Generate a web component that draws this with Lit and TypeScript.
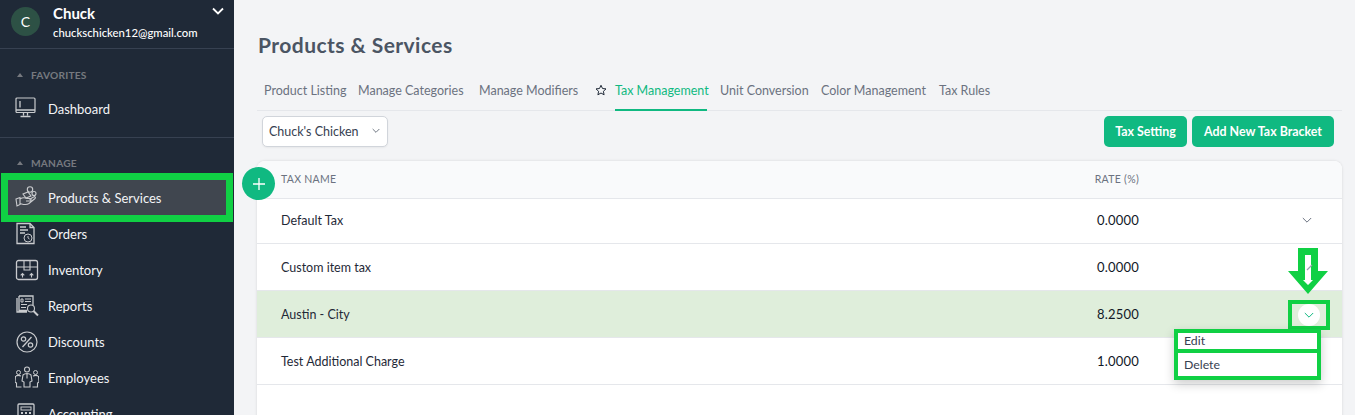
import { LitElement, html, css, svg } from "lit";
import { customElement } from "lit/decorators.js";
import { styleMap } from "lit/directives/style-map.js";

const icons: Record<string, unknown> = {
  dashboard: svg`<rect x="1" y="1" width="19" height="14.500" rx="1" fill="none" stroke="currentColor" stroke-width="1.200"/><path d="M5 4v6.500M1 13h19M8.500 15.500v3M12.500 15.500v3M5.500 19.500h10" fill="none" stroke="currentColor" stroke-width="1.300"/>`,
  products: svg`<path d="M1 13l4-1.500v7L2 20zM5 13c3-2 5-1.500 7-.5h3c1.500 0 1.500 2.500 0 2.500h-4M5 17.500c4 1 6 2 9 0l6-5c1-1 0-2.500-1.500-1.500l-4 2.500" fill="none" stroke="currentColor" stroke-width="1.100"/><path d="M8 8l5-2 3 4-5 2z" fill="none" stroke="currentColor" stroke-width="1.100"/><circle cx="15" cy="3.500" r="2.700" fill="none" stroke="currentColor" stroke-width="1.100"/><circle cx="19" cy="7.500" r="2" fill="none" stroke="currentColor" stroke-width="1.100"/>`,
  orders: svg`<path d="M2 1.500h13l4 4v16H2zM15 1.500v4h4M5 5h6M5 8h8M5 11h5" fill="none" stroke="currentColor" stroke-width="1.300"/><circle cx="13" cy="16" r="4" fill="#1f2937" stroke="currentColor"/><path d="M13 14v2l1.500 1" fill="none" stroke="currentColor" stroke-width=".9"/>`,
  inventory: svg`<rect x="1.500" y="2.500" width="21" height="19" rx="2" fill="none" stroke="currentColor" stroke-width="1.300"/><path d="M1.500 9h21M9 2.500V12h6V2.500M7.500 19.500v-4M5.700 17.300l1.800-1.800 1.800 1.800M16.500 19.500v-4M14.700 17.300l1.800-1.800 1.800 1.800" fill="none" stroke="currentColor" stroke-width="1.100"/>`,
  reports: svg`<path d="M4 2h14v9M4 2v14.500h8M2 4v14h10" fill="none" stroke="currentColor" stroke-width="1.300"/><path d="M6 5h2v3H6zM10 5h6M10 7.500h6M6 10.500h6M6 13.500h5" fill="none" stroke="currentColor"/><circle cx="16" cy="14.500" r="3.500" fill="none" stroke="currentColor" stroke-width="1.100"/><path d="M18.500 17l4.500 4.500" stroke="currentColor" stroke-width="2"/>`,
  discounts: svg`<circle cx="12" cy="12" r="10" fill="none" stroke="currentColor" stroke-width="1.200"/><circle cx="8.500" cy="9" r="2.200" fill="none" stroke="currentColor" stroke-width="1.200"/><circle cx="15.500" cy="15" r="2.200" fill="none" stroke="currentColor" stroke-width="1.200"/><path d="M16.500 7L7.500 17" stroke="currentColor" stroke-width="1.300"/>`,
  employees: svg`<g transform="translate(-1 0)"><circle cx="13" cy="3.500" r="2.500" fill="none" stroke="currentColor" stroke-width="1.100"/><circle cx="4.500" cy="6.500" r="2" fill="none" stroke="currentColor"/><circle cx="21.500" cy="6.500" r="2" fill="none" stroke="currentColor"/><path d="M9 9c2-2 6-2 8 0l1 6-2 1v5h-6v-5l-2-1zM13 7.500v5M2 10c1-.7 3-.7 5 0M1.500 10L1 16l1.500 1v4h5M24 10c-1-.7-3-.7-5 0M24.500 10l.500 6-1.500 1v4h-5" fill="none" stroke="currentColor" stroke-width="1.100"/></g>`,
  accounting: svg`<rect x="3" y="2" width="16" height="23" rx="1" fill="none" stroke="currentColor" stroke-width="1.300"/><rect x="6" y="5" width="10" height="3" fill="none" stroke="currentColor"/><path d="M6 11h2M10 11h2M14 11h2M6 14h2M10 14h2M14 14h2M6 17h2M10 17h2M14 17h2" stroke="currentColor" stroke-width="1.800"/>`,
};

interface NavItem { id: string; label: string; active?: boolean }
const nav: NavItem[] = [
  { id: "products", label: "Products & Services", active: true },
  { id: "orders", label: "Orders" },
  { id: "inventory", label: "Inventory" },
  { id: "reports", label: "Reports" },
  { id: "discounts", label: "Discounts" },
  { id: "employees", label: "Employees" },
  { id: "accounting", label: "Accounting" },
];
const tabsLeft = [
  { label: "Product Listing", w: 81 },
  { label: "Manage Categories", w: 108 },
  { label: "Manage Modifiers", w: 100 },
];
const tabsRight = [
  { label: "Unit Conversion", w: 88 },
  { label: "Color Management", w: 105 },
  { label: "Tax Rules", w: 51 },
];
const rows = [
  { name: "Default Tax", rate: "0.0000", cls: "r1" },
  { name: "Custom item tax", rate: "0.0000", cls: "r2" },
  { name: "Austin - City", rate: "8.2500", cls: "r2 hl" },
  { name: "Test Additional Charge", rate: "1.0000", cls: "r2" },
];
const chevron = svg`<path d="M1 1l5 5 5-5" fill="none" stroke="currentColor" stroke-width="1.200"/>`;

@customElement("app-root")
export class AppRoot extends LitElement {
  static styles = css`
    :host { display: block; width: 1355px; height: 415px; overflow: hidden; position: relative; background: #f3f4f6; font-family: "Lato", "Noto Sans", sans-serif; }
    .shell { display: flex; height: 415px; }
    aside { width: 234px; flex: none; background: #1f2937; color: #fff; overflow: hidden; }
    .user { height: 49px; box-sizing: border-box; border-bottom: 1px solid #374151; display: flex; padding: 7px 11px 0; gap: 13px; position: relative; }
    .avatar { width: 29px; height: 29px; border-radius: 50%; background: #2d5145; display: flex; align-items: center; justify-content: center; font-size: 14px; }
    .uname { font-size: 15px; font-weight: 700; line-height: 15px; margin-top: -1px; }
    .mail { font-size: 11.300px; line-height: 14px; margin-top: 5px; font-weight: 500; }
    .caret { position: absolute; left: 212px; top: 7px; width: 12px; height: 8px; color: #fff; }
    .section { height: 14px; display: flex; align-items: center; gap: 8px; padding-left: 17px; color: #76797f; font-size: 10.200px; font-weight: 700; letter-spacing: .2px; }
    .tri { width: 0; height: 0; border: 3.500px solid transparent; border-bottom: 4px solid #76797f; border-top: 0; }
    .fav { margin-top: 19px; }
    .item { height: 36px; display: flex; align-items: center; padding-left: 15px; font-size: 13px; color: #f3f4f6; box-sizing: border-box; }
    .item svg { width: 24px; height: 24px; color: #c9cbce; flex: none; margin-right: 9px; }
    .dash { margin-top: 9px; }
    .rule { height: 1px; background: #374151; margin-top: 10px; }
    .man { margin-top: 18px; }
    .list { margin-top: 3px; }
    .active-frame { border: 7px solid #10d044; height: 49px; box-sizing: border-box; margin: 0 1px; }
    .active-frame .item { padding-left: 7px; height: 35px; background: #40464f; }
    .list .item.first { margin-top: -6px; }
    main { flex: 1; padding: 0 13px 0 23px; min-width: 0; position: relative; }
    h1 { margin: 33px 0 0 1px; font-size: 21px; line-height: 24px; font-weight: 700; color: #4b5563; letter-spacing: .45px; }
    .tabs { display: flex; margin-top: 17px; border-bottom: 1px solid #e5e7eb; padding-left: 7px; height: 36px; font-size: 12.500px; color: #6b7280; }
    .tab { height: 36px; line-height: 34px; box-sizing: border-box; margin-right: 13px; white-space: nowrap; }
    .tab.on { color: #10b981; border-bottom: 2px solid #10b981; height: 37px; }
    .star { width: 12px; height: 12px; margin: 10px 8px 0 3px; color: #1f2937; flex: none; }
    .bar { display: flex; justify-content: space-between; margin-top: 5px; height: 31px; }
    .select { margin-left: 5px; width: 126px; box-sizing: border-box; background: #fff; border: 1px solid #d1d5db; border-radius: 5px; display: flex; align-items: center; justify-content: space-between; padding: 0 7px 1px 6px; color: #374151; font-size: 12.500px; box-shadow: 0 1px 2px rgba(0,0,0,.05); }
    .select svg { width: 8px; height: 6px; color: #4b5563; }
    .btns { display: flex; gap: 5px; margin-right: 8px; }
    .btn { background: #10b981; color: #fff; border-radius: 5px; height: 31px; box-sizing: border-box; padding-bottom: 1px; display: flex; align-items: center; justify-content: center; font-size: 12.400px; font-weight: 700; }
    .b1 { width: 83px; } .b2 { width: 142px; }
    .card { margin-top: 14px; background: #fff; border-radius: 8px 8px 0 0; box-shadow: 0 0 3px rgba(0,0,0,.12); height: 260px; }
    .head { height: 37px; box-sizing: content-box; background: #f9fafb; border-bottom: 1px solid #e5e7eb; border-radius: 8px 8px 0 0; display: grid; grid-template-columns: 1fr 100px 203px; align-items: center; padding-left: 24px; font-size: 10.500px; color: #6b7280; letter-spacing: .3px; }
    .head > div { margin-top: -2px; }
    .head .rt { text-align: right; }
    .row { display: grid; grid-template-columns: 1fr 100px 203px; align-items: center; padding-left: 24px; border-bottom: 1px solid #e5e7eb; font-size: 12.500px; color: #1f2937; box-sizing: border-box; }
    .row.r1 { height: 45px; padding-bottom: 2px; } .row.r2 { height: 47px; }
    .row.hl { background: #dfeedb; }
    .rate { text-align: right; color: #111827; font-size: 13px; letter-spacing: .2px; }
    .chev { justify-self: end; margin-right: 30px; width: 10px; height: 7px; color: #6b7280; display: block; }
    .row.hl .chev { visibility: hidden; }
    .plus { position: absolute; left: 8px; top: 167px; width: 33px; height: 33px; border-radius: 50%; background: #10b981; color: #fff; display: flex; align-items: center; justify-content: center; }
    .plus svg { width: 12px; height: 12px; }
    .pick { position: absolute; left: 1288px; top: 300px; width: 42px; height: 30px; border: 4px solid #10d044; box-sizing: border-box; display: flex; align-items: center; justify-content: center; }
    .disc { width: 22px; height: 22px; border-radius: 50%; background: #fff; display: flex; align-items: center; justify-content: center; color: #10b981; }
    .disc svg { width: 10px; height: 7px; }
    .arrow { position: absolute; left: 1288px; top: 248px; width: 40px; height: 47px; }
    .menu { position: absolute; left: 1174px; top: 329px; width: 147px; background: #fff; box-shadow: 0 4px 10px rgba(0,0,0,.2); font-size: 12.300px; color: #374151; }
    .mi { border: 4px solid #10d044; box-sizing: border-box; padding-left: 6px; display: flex; align-items: center; }
    .m1 { height: 24px; padding-bottom: 2px; } .m2 { height: 27px; border-top: 0; }
  `;

  render() {
    return html`
      <div class="shell">
        <aside>
          <div class="user">
            <div class="avatar">C</div>
            <div>
              <div class="uname">Chuck</div>
              <div class="mail">chuckschicken12@gmail.com</div>
            </div>
            <svg class="caret" viewBox="0 0 12 8"><path d="M1 1.500l5 5 5-5" fill="none" stroke="currentColor" stroke-width="1.800"/></svg>
          </div>
          <div class="section fav"><span class="tri"></span>FAVORITES</div>
          <div class="item dash"><svg viewBox="0 0 24 24">${icons.dashboard}</svg>Dashboard</div>
          <div class="rule"></div>
          <div class="section man"><span class="tri"></span>MANAGE</div>
          <div class="list">
            ${nav.map((n) => n.active
              ? html`<div class="active-frame"><div class="item"><svg viewBox="0 0 24 24">${icons[n.id]}</svg>${n.label}</div></div>`
              : html`<div class="item ${n.id === "orders" ? "first" : ""}"><svg viewBox="0 0 24 24">${icons[n.id]}</svg>${n.label}</div>`)}
          </div>
        </aside>
        <main>
          <h1>Products &amp; Services</h1>
          <div class="tabs">
            ${tabsLeft.map((t) => html`<div class="tab" style=${styleMap({ width: t.w + "px" })}>${t.label}</div>`)}
            <svg class="star" viewBox="0 0 24 24"><path d="M12 2.500l3 6.500 7 .8-5.200 4.800 1.400 7L12 18l-6.200 3.600 1.400-7L2 9.800 9 9z" fill="none" stroke="currentColor" stroke-width="2"/></svg>
            <div class="tab on" style=${styleMap({ width: "92px" })}>Tax Management</div>
            ${tabsRight.map((t) => html`<div class="tab" style=${styleMap({ width: t.w + "px" })}>${t.label}</div>`)}
          </div>
          <div class="bar">
            <div class="select">Chuck's Chicken<svg viewBox="0 0 12 8">${chevron}</svg></div>
            <div class="btns">
              <div class="btn b1">Tax Setting</div>
              <div class="btn b2">Add New Tax Bracket</div>
            </div>
          </div>
          <div class="card">
            <div class="head"><div>TAX NAME</div><div class="rt">RATE (%)</div><div></div></div>
            ${rows.map((r) => html`
              <div class="row ${r.cls}">
                <div>${r.name}</div>
                <div class="rate">${r.rate}</div>
                <svg class="chev" viewBox="0 0 12 8">${chevron}</svg>
              </div>`)}
          </div>
          <div class="plus"><svg viewBox="0 0 12 12"><path d="M6 0v12M0 6h12" stroke="currentColor" stroke-width="1.300"/></svg></div>
        </main>
      </div>
      <svg class="arrow" viewBox="0 0 40 47">
        <path d="M10 0h20v23h10L20 46 0 23h10z" fill="#10d044"/>
        <path d="M17 7h6v25h2l-5 5-5-5h2z" fill="#fff"/>
        <path d="M19 22l5-5" stroke="#9ca3af" stroke-width="1.300"/>
      </svg>
      <div class="pick"><div class="disc"><svg viewBox="0 0 12 8">${chevron}</svg></div></div>
      <div class="menu"><div class="mi m1">Edit</div><div class="mi m2">Delete</div></div>
    `;
  }
}
